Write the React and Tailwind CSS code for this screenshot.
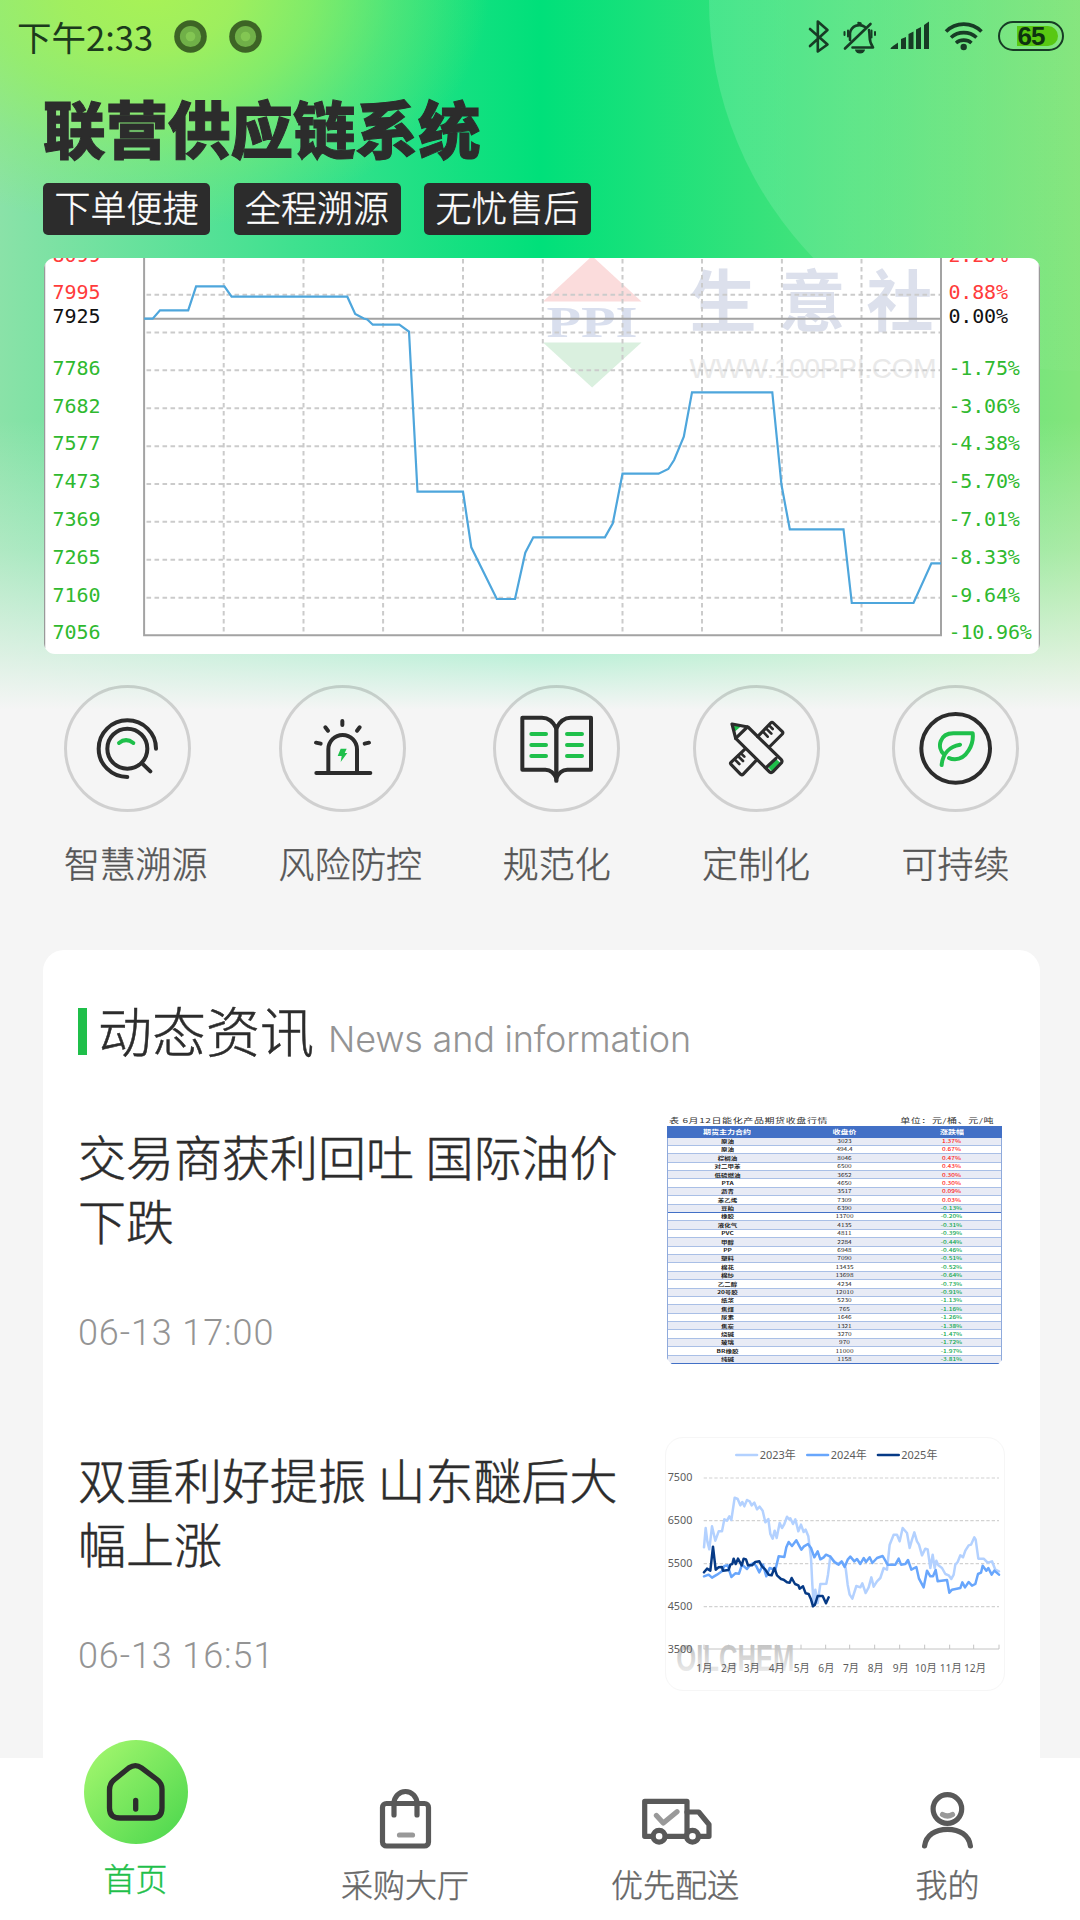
import clsx from 'clsx';

const TAGS = ['下单便捷', '全程溯源', '无忧售后'];

const PRICE_LABELS = [
    { y: 262, price: '8099', pct: '2.20%', color: '#ff3b3b' },
    { y: 299, price: '7995', pct: '0.88%', color: '#ff3b3b' },
    { y: 323, price: '7925', pct: '0.00%', color: '#111111' },
    { y: 374.5, price: '7786', pct: '-1.75%', color: '#2fb92f' },
    { y: 412.5, price: '7682', pct: '-3.06%', color: '#2fb92f' },
    { y: 450, price: '7577', pct: '-4.38%', color: '#2fb92f' },
    { y: 488, price: '7473', pct: '-5.70%', color: '#2fb92f' },
    { y: 525.5, price: '7369', pct: '-7.01%', color: '#2fb92f' },
    { y: 563.5, price: '7265', pct: '-8.33%', color: '#2fb92f' },
    { y: 601.5, price: '7160', pct: '-9.64%', color: '#2fb92f' },
    { y: 639, price: '7056', pct: '-10.96%', color: '#2fb92f' },
];

const GRID_Y = [294.7, 332.5, 370.3, 408.3, 446.3, 484, 521.7, 559.7, 597.7];
const GRID_X = [223.2, 303, 382.6, 462.5, 542.3, 622, 701.5, 781.4, 861];

const PRICE_LINE =
    '143.6,318.7 152.2,318.7 159.5,310.3 187.7,310.3 195.6,286.3 223.9,286.3 231.1,296.7 346.8,296.7 354.7,314 363.3,318.5 366.8,319.5 372.3,324.7 398.8,324.7 408.5,331.7 417,491.7 462.5,491.7 470.8,547.3 496.3,599 514.5,599 524.8,552.7 532.8,537.3 604.4,537.3 612.3,523.3 622,473.7 658.1,473.7 667.8,469 673.6,460 683.3,436.7 691.5,392.3 771.8,392.3 781,485 789.3,529.3 843,529.3 851.3,603 913,603 930.9,563.3 940.5,563.3';

const QUOTES = [
    ['原油', '3023', '1.37%'],
    ['原油', '494.4', '0.67%'],
    ['棕榈油', '8046', '0.47%'],
    ['对二甲苯', '6500', '0.43%'],
    ['低硫燃油', '3652', '0.30%'],
    ['PTA', '4650', '0.30%'],
    ['沥青', '3517', '0.09%'],
    ['苯乙烯', '7309', '0.03%'],
    ['豆粕', '6390', '-0.13%'],
    ['橡胶', '13700', '-0.20%'],
    ['液化气', '4135', '-0.31%'],
    ['PVC', '4811', '-0.39%'],
    ['甲醇', '2284', '-0.44%'],
    ['PP', '6948', '-0.46%'],
    ['塑料', '7090', '-0.51%'],
    ['棉花', '13435', '-0.52%'],
    ['棉纱', '13698', '-0.64%'],
    ['乙二醇', '4234', '-0.73%'],
    ['20号胶', '12010', '-0.91%'],
    ['纸浆', '5230', '-1.13%'],
    ['焦煤', '765', '-1.16%'],
    ['尿素', '1646', '-1.26%'],
    ['焦炭', '1321', '-1.38%'],
    ['烧碱', '3270', '-1.47%'],
    ['玻璃', '970', '-1.72%'],
    ['BR橡胶', '11000', '-1.97%'],
    ['纯碱', '1158', '-3.81%'],
];

const YEARS = [
    {
        name: '2023年',
        x: 258,
        color: '#b3d1ff',
        points: '161,368 166,310 171,350 177,374 185,305 195,348 205,320 215,320 222,284 230,288 237,275 243,286 253,219 262,223 270,242 276,232 282,245 290,226 298,230 304,242 312,234 320,254 328,246 337,258 345,293 354,283 360,328 367,342 373,318 379,340 388,295 395,310 402,298 410,276 416,284 420,281 428,298 435,284 444,320 452,300 460,322 466,315 474,335 482,400 486,480 490,540 495,495 502,535 510,478 528,477 533,450 540,395 550,408 560,418 575,412 586,430 592,480 598,510 606,522 618,484 630,488 636,476 646,505 655,488 663,458 670,486 680,470 690,460 700,430 710,435 718,360 730,330 740,330 748,350 757,310 770,325 778,370 785,345 792,323 800,350 806,360 815,392 825,372 832,374 840,430 847,390 853,430 858,408 864,422 875,430 885,448 895,452 903,463 910,450 915,420 922,412 930,392 938,398 945,378 955,362 962,360 972,338 976,345 984,402 1000,402 1012,414 1025,410 1035,435 1046,440',
    },
    {
        name: '2024年',
        x: 471,
        color: '#68a6fc',
        points: '161,455 175,450 185,459 200,450 215,440 222,424 232,422 243,457 255,446 266,447 275,420 290,433 300,420 310,415 318,425 327,443 338,420 348,455 358,430 375,436 385,395 402,397 408,368 415,352 425,364 438,347 446,362 453,375 460,366 473,358 482,370 492,398 502,380 510,404 520,398 527,390 540,396 552,412 565,420 574,410 583,427 592,405 600,396 612,410 620,403 630,418 640,400 647,412 658,398 666,415 680,400 697,394 712,420 735,420 745,402 752,420 765,418 773,406 783,435 798,427 806,462 820,488 830,438 840,455 848,455 856,436 862,470 890,466 897,504 905,495 930,490 936,473 944,488 955,472 965,483 975,478 983,448 992,444 997,423 1008,438 1014,430 1024,450 1032,438 1046,450',
    },
    {
        name: '2025年',
        x: 683,
        color: '#063a86',
        points: '161,443 170,432 180,438 188,366 196,435 205,428 215,427 218,438 235,436 240,420 246,418 250,402 256,418 263,402 274,422 280,402 287,404 293,422 305,422 315,412 327,410 335,425 345,435 355,450 364,452 372,430 380,452 392,463 400,465 410,473 418,474 424,460 434,478 444,482 448,492 458,485 466,506 475,508 482,524 488,545 494,540 502,514 517,514 527,536 535,518',
    },
];

const MONTH_X = [162, 236, 304, 379, 454, 528, 602, 676, 751, 826, 901, 974];

const StatusBar = () => (
    <div className="flex h-[72px] items-center pl-[17px] pr-4 text-[#1c3a1c]">
        <span className="w-[157px] whitespace-nowrap text-[34.500px] leading-[72px]">下午2:33</span>
        <div className="flex gap-[22px]">
            {[0, 1].map((i) => (
                <svg key={i} className="h-[33px] w-[33px]" viewBox="0 0 33 33">
                    <circle cx="16.5" cy="16.5" r="16.3" fill="#3d6425" />
                    <circle cx="16.5" cy="16.5" r="10.6" fill="#70b048" />
                    <circle cx="16.5" cy="16.5" r="4.8" fill="#83c653" />
                </svg>
            ))}
        </div>
        <svg className="ml-auto h-[44px] w-[190px]" viewBox="800 14 190 44" fill="none" stroke="#173b25" strokeLinecap="round" strokeLinejoin="round">
            {/* bluetooth */}
            <path d="M810 29l17.5 15.5-9.700 7V21.500l9.700 8.500L810 46" strokeWidth="2.600" />
            {/* muted bell */}
            <path d="M865 27a9.500 9.500 0 0 0-15 6v7M860.500 23.500a8 8 0 0 0-2-.5M869 30c1.500 8-1 10 4 17.500h-20.500M845 48.500L870.500 24" strokeWidth="2.600" />
            <path d="M844.500 32v3M848 30.500v6M871.500 30.500v7M875 32v3" strokeWidth="2" />
            <path d="M855 49.500h10a5 4 0 0 1-10 0z" fill="#173b25" stroke="none" />
            <g fill="#173b25" stroke="none">
                <path d="M890.500 49c0-2 6-5 7.500-6.500v6.500zM901 49V39l5-2v12zM908.500 49V34l5-2.500V49zM916 49V29.500l5-2.500v22zM924 49V25l5-3.500V49z" />
            </g>
            {/* wifi */}
            <path d="M946 31.500a25 25 0 0 1 35.500 0M951 37.500a19 19 0 0 1 25.500 0M956 43a12 12 0 0 1 15.500 0" strokeWidth="3.600" strokeLinecap="butt" />
            <circle cx="963.700" cy="47" r="3.200" fill="#173b25" stroke="none" />
        </svg>
        <div className="relative ml-2 flex h-[30px] w-[66px] items-center justify-center rounded-full border-[2.500px] border-[#173b25]">
            <div className="absolute right-1 top-[3px] bottom-[3px] w-[41px] rounded-r-full bg-[#58c812]" />
            <span className="relative font-['Liberation_Sans'] text-[26px] font-bold leading-none tracking-[-1px] text-[#0d3310]">65</span>
        </div>
    </div>
);

const PriceChart = () => (
    <div className="ml-[43.500px] mt-[23px] h-[396px] w-[996px] overflow-hidden rounded-[11px] bg-white">
        <svg className="block h-full w-full" viewBox="43.5 258 996 396">
            {/* watermark */}
            <path d="M591.600 256L641 301.500H542.500z" fill="#fbdcdc" />
            <path d="M542.500 342.500H641L591.600 387.500z" fill="#daf0df" />
            <text x="546" y="337" fill="#d9dfee" fontFamily="Liberation Serif" fontWeight="700" fontSize="44" textLength="91" lengthAdjust="spacingAndGlyphs">PPI</text>
            <g fill="#dce0ec" fontFamily="'Noto Sans CJK SC', sans-serif" fontWeight="700" fontSize="67">
                <text x="689" y="326">生</text>
                <text x="778" y="326">意</text>
                <text x="866" y="326">社</text>
            </g>
            <text x="689" y="377.500" fill="#e9e9e9" fontFamily="Liberation Sans" fontSize="28" textLength="247">WWW.100PPI.COM</text>

            <g stroke="#cbcbcb" strokeWidth="2" strokeDasharray="4.600 3.400">
                {GRID_Y.map((y) => (
                    <line key={y} x1="146" x2="940" y1={y} y2={y} />
                ))}
                {GRID_X.map((x) => (
                    <line key={x} x1={x} x2={x} y1="259" y2="635" />
                ))}
            </g>
            <path d="M143.600 258V635.300H940.500V258M143.600 318.700H940.500" fill="none" stroke="#a3a3a3" strokeWidth="2" />
            <path d="M44 264V648M1039 264V648" stroke="#999999" strokeWidth="1.500" />
            <polyline points={PRICE_LINE} fill="none" stroke="#4ea6dc" strokeWidth="2.200" />
            <g fontFamily="DejaVu Sans Mono" fontSize="20">
                {PRICE_LABELS.map((row) => (
                    <g key={row.price} fill={row.color}>
                        <text x="52" y={row.y}>{row.price}</text>
                        <text x="948" y={row.y} textLength={row.pct.length * 11.9}>{row.pct}</text>
                    </g>
                ))}
            </g>
        </svg>
    </div>
);

const FEATURES = [
    {
        label: '智慧溯源',
        viewBox: '72 45 381 381',
        icon: (
            <>
                <path d="M348 236a86 85 0 1 0-86 85" />
                <circle cx="262" cy="236" r="60" />
                <path d="M307 281l24 23" />
                <path d="M237 219q21-17 43 0" stroke="#1fc04b" />
            </>
        ),
    },
    {
        label: '风险防控',
        viewBox: '717 45 381 381',
        icon: (
            <>
                <path d="M865 306v-68a43 43 0 0 1 86 0v68M829 309h162" />
                <path d="M907 153v12M856 172l8 10M959 172l-8 10M828 218l14 3M987 218l-13 3" />
                <path d="M902 236h18l-6 13h8l-20 27 3-18h-12z" fill="#1fc04b" stroke="none" />
            </>
        ),
    },
    {
        label: '规范化',
        viewBox: '-135 45 381 381',
        icon: (
            <>
                <path d="M55 175Q40 143 12 143H-47V299H22Q45 300 55 325Q65 300 88 299H159V143H98Q70 143 55 175z" />
                <path d="M55 170V332" strokeWidth="13" />
                <path d="M-20 192h44M-20 225h44M-20 258h44M87 192h45M87 225h45M87 258h45" stroke="#1fc04b" />
            </>
        ),
    },
    {
        label: '定制化',
        viewBox: '462 45 381 381',
        icon: (
            <g strokeWidth="9.500">
                <path d="M656 200L695 159Q699 155 703 159L730 185Q733 188 730 192L691 231" />
                <path d="M617 238L576 277Q573 280 576 283L605 313Q609 316 612 313L651 272" />
                <path d="M672 185l14 15M681 175l16 16M691 167l10 10M587 268l14 14M597 258l15 15M606 250l10 10" strokeWidth="8" />
                <path d="M580 163l27 5-20 17z" fill="#1fc04b" stroke="none" />
                <path d="M686 290l24-24 16 14-25 26z" fill="#1fc04b" stroke="none" />
                <path d="M579 162L627 171L727 269Q731 274 727 279L702 305Q697 310 692 306L590 205z" />
                <path d="M590 205l35-34M682 292l29-27" />
            </g>
        ),
    },
    {
        label: '可持续',
        viewBox: '1056 45 381 381',
        icon: (
            <>
                <circle cx="1247" cy="235" r="103" />
                <path d="M1205 285c3-35 25-56 55-61M1213 254C1188 232 1200 190 1240 190H1298C1302 222 1280 268 1245 268Q1234 268 1227 264" stroke="#1fc04b" strokeWidth="12" />
            </>
        ),
    },
];

const Features = () => (
    <div className="mt-[31px] flex justify-between pl-16 pr-[61px]">
        {FEATURES.map((f) => (
            <div key={f.label} className="flex flex-col">
                <div className="h-[127px] w-[127px] rounded-full border-[3px] border-black/15">
                    <svg className="-m-[3px] h-[127px] w-[127px]" viewBox={f.viewBox} fill="none" stroke="#2c2c2c" strokeWidth="12" strokeLinecap="round" strokeLinejoin="round">
                        {f.icon}
                    </svg>
                </div>
                <span className={clsx('mt-[24px] text-[36px] font-light leading-[52px] text-[#555555] [-webkit-text-stroke:0.4px]', f.label.length === 3 ? 'text-center' : '-mr-px tracking-[-0.200px]')}>
                    {f.label}
                </span>
            </div>
        ))}
    </div>
);

const QuoteTable = () => (
    <div className="mt-px h-[254px] w-[340px] overflow-hidden rounded-[18px] bg-white pl-[2px] pr-[3px] font-['Noto_Sans_CJK_SC',sans-serif]">
        <div className="flex h-3 items-center justify-between pl-[2px] pr-2 text-[10px] leading-3 text-[#333333]">
            <span className="scale-y-[0.65] whitespace-nowrap tracking-[0.6px]">表 6月12日能化产品期货收盘行情</span>
            <span className="scale-y-[0.65] whitespace-nowrap tracking-[0.6px]">单位：元/桶、元/吨</span>
        </div>
        <div className="grid h-[11.500px] grid-cols-[120px_115px_100px] items-center bg-[#4270c6] text-center text-[8px] font-bold leading-none text-white">
            <span className="scale-y-75">期货主力合约</span>
            <span className="scale-y-75">收盘价</span>
            <span className="scale-y-75">涨跌幅</span>
        </div>
        <div className="border-x border-[#8faadc]">
            {QUOTES.map(([name, price, pct], i) => (
                <div
                    key={i}
                    className={clsx(
                        'grid h-[8.400px] grid-cols-[119px_115px_99px] items-center border-b text-center text-[6.500px] leading-none text-[#222222]',
                        i % 2 === 0 ? 'bg-[#e8ebf5]' : 'bg-white',
                        i === 8 || i === 26 ? 'border-[#4270c6]' : 'border-[#a9bfe6]'
                    )}
                >
                    <span className="scale-y-75 font-bold">{name}</span>
                    <span className="scale-y-75">{price}</span>
                    <span className={clsx('scale-y-75 font-medium', i < 8 ? 'text-[#ff2020]' : 'text-[#10a850]')}>{pct}</span>
                </div>
            ))}
        </div>
    </div>
);

const YearChart = () => (
    <div className="mt-px h-[254px] w-[340px] overflow-hidden rounded-[18px] border border-[#f6f6f6] bg-white">
        <svg className="-m-px block h-[254px] w-[340px]" viewBox="44 37 1020 762" fontFamily="'Noto Sans', 'Noto Sans CJK SC', sans-serif" fill="#5c5c5c">
            <defs>
                <linearGradient id="mark" x1="0" y1="0" x2="0" y2="1">
                    <stop offset="0.2" stopColor="#c4c4c4" />
                    <stop offset="1" stopColor="#f4f4f4" />
                </linearGradient>
            </defs>
            <text x="78" y="738" fontFamily="Liberation Sans" fontWeight="700" fontSize="112" fill="url(#mark)" textLength="354" lengthAdjust="spacingAndGlyphs">OILCHEM</text>
            <path d="M160 160H1046M160 288H1046M160 417H1046M160 546H1046" stroke="#d2d2d2" strokeWidth="3.500" strokeDasharray="10 6" />
            <path d="M160 673H1046M161 660v13M235 660v13M304 660v13M378 660v13M452 660v13M526 660v13M598 660v13M673 660v13M748 660v13M823 660v13M898 660v13M970 660v13M1046 660v13" stroke="#c4c4c4" strokeWidth="3" fill="none" />
            {[7500, 6500, 5500, 4500, 3500].map((v, i) => (
                <text key={v} x="52" y={170 + i * 128.5} fontSize="35" textLength="74" lengthAdjust="spacingAndGlyphs">{v}</text>
            ))}
            {MONTH_X.map((x, i) => (
                <text key={x} x={x} y="743" fontSize="35" textAnchor="middle" textLength={i < 9 ? 48 : 66} lengthAdjust="spacingAndGlyphs">{i + 1}月</text>
            ))}
            {YEARS.map((s) => (
                <g key={s.name}>
                    <path d={`M${s.x} 91h62`} stroke={s.color} strokeWidth="8" strokeLinecap="round" />
                    <text x={s.x + 70} y="102" fontSize="35" textLength="108" lengthAdjust="spacingAndGlyphs">{s.name}</text>
                    <polyline points={s.points} fill="none" stroke={s.color} strokeWidth="7.500" strokeLinejoin="round" strokeLinecap="round" />
                </g>
            ))}
        </svg>
    </div>
);

const NewsItem = ({ title, time, children }) => (
    <div className="flex h-[323px] justify-between">
        <div className="flex w-[545px] flex-col">
            <h3 className="mt-[10px] text-[48px] font-light leading-[64px] text-[#2c2c2c] [word-spacing:1px] [-webkit-text-stroke:0.5px]">{title}</h3>
            <span className="mt-[56px] font-['Roboto'] text-[36px] font-light leading-[52px] tracking-[0.9px] text-[#949494]">{time}</span>
        </div>
        {children}
    </div>
);

const News = () => (
    <section className="ml-[43px] mt-[62px] h-[808px] w-[997px] overflow-hidden rounded-t-[21px] bg-white pl-[35px] pr-[35px]">
        <div className="mt-[48px] flex h-[66px] items-center">
            <div className="h-[47px] w-[9px] bg-[#1fbf4a]" />
            <h2 className="-mt-[2px] ml-[11px] text-[54px] font-light leading-[66px] text-[#2c2c2c] [-webkit-text-stroke:0.5px]">动态资讯</h2>
            <span className="ml-[14px] mt-[15px] font-['Inter'] text-[36px] font-light leading-[50px] tracking-[-0.200px] text-[#949494]">News and information</span>
        </div>
        <div className="mt-[49px]">
            <NewsItem title="交易商获利回吐 国际油价下跌" time="06-13 17:00">
                <QuoteTable />
            </NewsItem>
            <NewsItem title="双重利好提振 山东醚后大幅上涨" time="06-13 16:51">
                <YearChart />
            </NewsItem>
        </div>
    </section>
);

const TABS = [
    {
        label: '采购大厅',
        icon: (
            <>
                <rect x="7.500" y="17.500" width="46" height="42.500" rx="4" />
                <path d="M19 29V17.500a11.500 12 0 0 1 23 0V29" />
                <path d="M24.500 49h13" stroke="#999999" />
            </>
        ),
    },
    {
        label: '优先配送',
        icon: (
            <>
                <path d="M-0.300 15.300H42V50.300H-0.300z" />
                <path d="M42 26H53.700L64 38.500V50.300H42" />
                <circle cx="14.100" cy="50.300" r="5.900" fill="white" />
                <circle cx="47.500" cy="50.300" r="5.900" fill="white" />
                <path d="M11.400 29.500L18.300 37L32 25.700" stroke="#999999" />
            </>
        ),
    },
    {
        label: '我的',
        icon: (
            <>
                <circle cx="32.400" cy="23" r="14.300" />
                <path d="M9.600 60C11 49.500 20 43.300 32.500 43.300S54 49.500 55.400 60" />
                <path d="M27.500 28.500q5 3 10 0" stroke="#999999" />
            </>
        ),
    },
];

const TabBar = () => (
    <nav className="relative grid h-[162px] grid-cols-4 bg-white text-[32px] font-light leading-[46px] [-webkit-text-stroke:0.4px]">
        <div className="flex flex-col items-center pl-px text-[#1fbf4a]">
            <svg className="-mt-[18px] h-[104px] w-[104px]" viewBox="0 0 104 104" fill="none" strokeWidth="5.300" strokeLinejoin="round" strokeLinecap="round">
                <defs>
                    <linearGradient id="home" x1="0" y1="0" x2="1" y2="1">
                        <stop offset="0.1" stopColor="#9ff56c" />
                        <stop offset="0.9" stopColor="#52d950" />
                    </linearGradient>
                </defs>
                <circle cx="52" cy="52" r="52" fill="url(#home)" />
                <path d="M45 27.800L30.500 39.500Q25.500 43.500 25.500 50V68Q25.500 78 36 78H67.500Q78 78 78 68V49Q78 43.500 73 39.500L57.500 27.800Q51.500 23.500 45 27.800zM51.700 60.500v8.500" stroke="#2c2c2c" />
            </svg>
            <span className="mt-[10px]">首页</span>
        </div>
        {TABS.map((tab) => (
            <div key={tab.label} className="flex flex-col items-center text-[#666666]">
                <svg className="mt-[28px] h-[66px] w-[60px] overflow-visible" viewBox="0 0 60 66" fill="none" stroke="#595959" strokeWidth="5.200" strokeLinecap="round" strokeLinejoin="round">
                    {tab.icon}
                </svg>
                <span className={clsx('mt-[8px]', tab.label.length === 2 && 'pl-[5px]')}>{tab.label}</span>
            </div>
        ))}
    </nav>
);

const Backdrop = () => (
    <div className="absolute inset-x-0 top-0 h-[720px] overflow-hidden bg-[linear-gradient(90deg,#8ae2a8_0%,#00e07a_50%,#84e57c_100%)]">
        <div className="absolute inset-0 bg-[radial-gradient(340px_240px_at_150px_-10px,#a8f256_0%,#a6f058e6_25%,#9cf05ab3_48%,#94ee6059_72%,#90ec6800_100%)]" />
        <div className="absolute -top-[371px] left-[709px] h-[742px] w-[742px] rounded-full bg-[linear-gradient(90deg,rgba(255,255,255,0.14)_0%,rgba(255,255,255,0.11)_20%,rgba(255,255,255,0.02)_50%)]" />
        <div className="absolute inset-0 bg-[linear-gradient(180deg,#f5f5f500_420px,#f5f5f559_550px,#f5f5f5c4_655px,#f5f5f5_710px)]" />
    </div>
);

const App = () => {
    return (
        <div className="relative h-[1920px] w-[1080px] overflow-hidden bg-[#f5f5f5] font-['Noto_Sans_CJK_SC',sans-serif]">
            <Backdrop />
            <div className="relative flex flex-col">
                <StatusBar />
                <h1 className="ml-[43px] mt-[15px] text-[62.500px] font-black leading-[80px] text-[#2c2c2c] [-webkit-text-stroke:1px]">联营供应链系统</h1>
                <div className="ml-[43px] mt-[16px] flex gap-[23.500px]">
                    {TAGS.map((tag) => (
                        <span key={tag} className="flex h-[52px] w-[167px] items-center justify-center rounded-[5px] bg-[#2c2c2c] text-[36px] font-light leading-[48px] text-white [-webkit-text-stroke:0.4px]">
                            <span className="-mt-1.5">{tag}</span>
                        </span>
                    ))}
                </div>
                <PriceChart />
                <Features />
                <News />
                <TabBar />
            </div>
        </div>
    );
};

export default App;
